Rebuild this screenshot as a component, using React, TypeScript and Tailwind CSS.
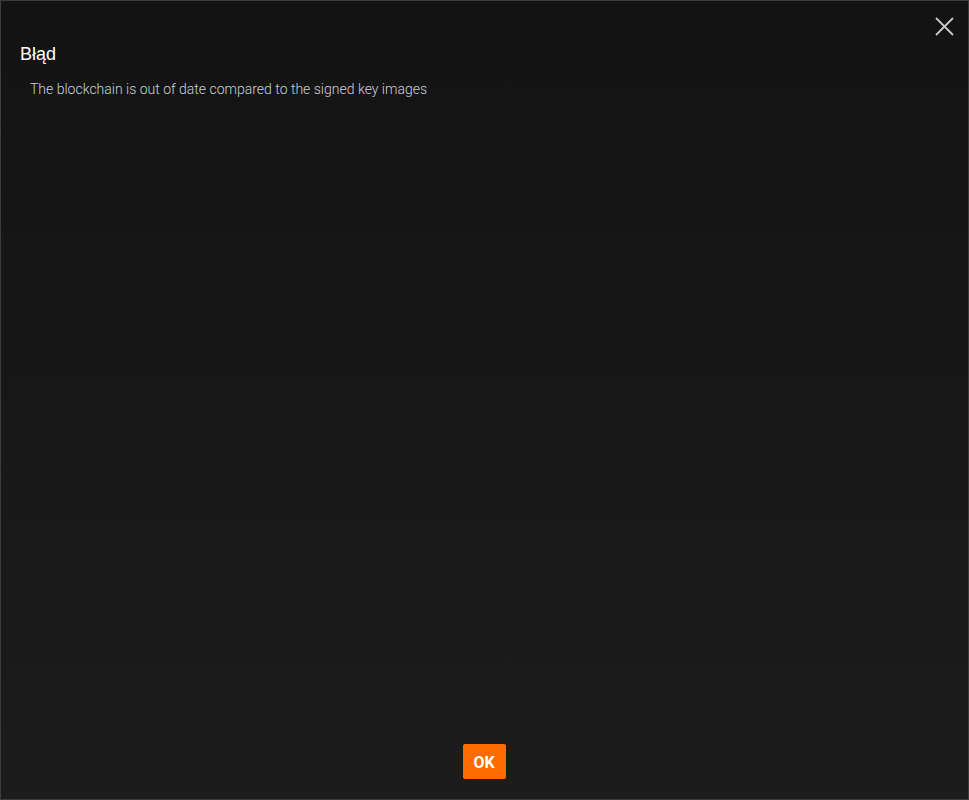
import React from "react";

export default function App() {
  return (
    <div className="w-[969px] h-[800px] border border-[#3c3c3c] bg-gradient-to-b from-[#131313] to-[#1c1c1c] flex flex-col relative">
      <button className="absolute right-[14px] top-[15px] w-[20px] h-[20px] flex items-center justify-center">
        <svg width="19" height="19" viewBox="0 0 19 19" fill="none" stroke="#c8c8c8" strokeWidth="1.8">
          <path d="M1 1 L18 18 M18 1 L1 18" />
        </svg>
      </button>
      <div className="pt-[42px] pl-[19px] text-[18px] leading-[22px] text-white font-['Liberation_Sans',Arial,sans-serif]">
        Błąd
      </div>
      <div className="mt-[15px] pl-[29px] text-[14px] leading-[18px] text-[#c9d2dc] font-['Roboto',sans-serif] font-light">
        The blockchain is out of date compared to the signed key images
      </div>
      <div className="flex-1" />
      <div className="flex justify-center pb-[20px]">
        <button className="w-[43px] h-[35px] ml-[-1px] pt-[2px] rounded-[2px] bg-[#ff6b00] text-white font-bold text-[16px] font-['Roboto',sans-serif] flex items-center justify-center">
          OK
        </button>
      </div>
    </div>
  );
}
